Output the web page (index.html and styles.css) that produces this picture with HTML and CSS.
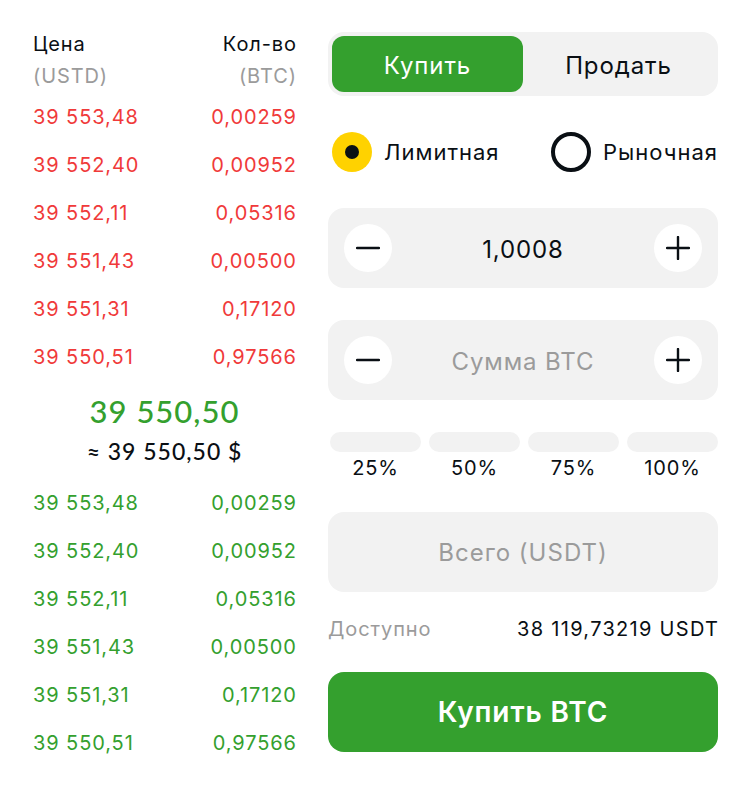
FILE: index.html
```html
<!DOCTYPE html>
<html lang="ru">
<head>
<meta charset="utf-8">
<link rel="stylesheet" href="styles.css">
</head>
<body>
<div class="page">
  <section class="book">
    <div class="book-head">
      <div class="row"><span class="h">Цена</span><span class="h">Кол-во</span></div>
      <div class="row"><span class="sub">(USTD)</span><span class="sub">(BTC)</span></div>
    </div>
    <div class="orders red">
      <div class="order"><span>39 553,48</span><span>0,00259</span></div>
      <div class="order"><span>39 552,40</span><span>0,00952</span></div>
      <div class="order"><span>39 552,11</span><span>0,05316</span></div>
      <div class="order"><span>39 551,43</span><span>0,00500</span></div>
      <div class="order"><span>39 551,31</span><span>0,17120</span></div>
      <div class="order"><span>39 550,51</span><span>0,97566</span></div>
    </div>
    <div class="mid">
      <div class="mid-price">39 550,50</div>
      <div class="mid-usd">≈ 39 550,50 $</div>
    </div>
    <div class="orders green">
      <div class="order"><span>39 553,48</span><span>0,00259</span></div>
      <div class="order"><span>39 552,40</span><span>0,00952</span></div>
      <div class="order"><span>39 552,11</span><span>0,05316</span></div>
      <div class="order"><span>39 551,43</span><span>0,00500</span></div>
      <div class="order"><span>39 551,31</span><span>0,17120</span></div>
      <div class="order"><span>39 550,51</span><span>0,97566</span></div>
    </div>
  </section>

  <section class="form">
    <div class="toggle">
      <button class="tab active">Купить</button>
      <button class="tab">Продать</button>
    </div>

    <div class="radios">
      <label class="radio"><span class="dot on"></span>Лимитная</label>
      <label class="radio"><span class="dot off"></span>Рыночная</label>
    </div>

    <div class="stepper">
      <span class="round"><svg width="24" height="24" viewBox="0 0 24 24"><path d="M1 12h22" stroke="#0a0f14" stroke-width="2.4" stroke-linecap="round"/></svg></span>
      <span class="value">1,0008</span>
      <span class="round"><svg width="24" height="24" viewBox="0 0 24 24"><path d="M1 12h22M12 1v22" stroke="#0a0f14" stroke-width="2.4" stroke-linecap="round"/></svg></span>
    </div>

    <div class="stepper gap32">
      <span class="round"><svg width="24" height="24" viewBox="0 0 24 24"><path d="M1 12h22" stroke="#0a0f14" stroke-width="2.4" stroke-linecap="round"/></svg></span>
      <span class="value placeholder">Сумма BTC</span>
      <span class="round"><svg width="24" height="24" viewBox="0 0 24 24"><path d="M1 12h22M12 1v22" stroke="#0a0f14" stroke-width="2.4" stroke-linecap="round"/></svg></span>
    </div>

    <div class="percents">
      <div class="pct"><span class="bar"></span><span class="pct-label">25%</span></div>
      <div class="pct"><span class="bar"></span><span class="pct-label">50%</span></div>
      <div class="pct"><span class="bar"></span><span class="pct-label">75%</span></div>
      <div class="pct"><span class="bar"></span><span class="pct-label">100%</span></div>
    </div>

    <div class="total">Всего (USDT)</div>

    <div class="avail"><span class="avail-label">Доступно</span><span class="avail-value">38 119,73219 USDT</span></div>

    <button class="buy">Купить BTC</button>
  </section>
</div>
</body>
</html>
```
FILE: styles.css
```css
* { box-sizing: border-box; }
html, body { margin: 0; padding: 0; background: #fff; }
body {
  font-family: Inter, "Noto Sans", sans-serif;
  color: #0a0f14;
  width: 750px;
  height: 786px;
  overflow: hidden;
  letter-spacing: 0.9px;
}
.page {
  display: flex;
  gap: 32px;
  padding: 28px 32px 0 33px;
}
.book { width: 263px; display: flex; flex-direction: column; }
.row, .order {
  display: flex;
  justify-content: space-between;
  align-items: center;
}
.row { height: 32px; font-size: 20px; }
.row span:last-child, .order span:last-child { margin-right: -0.9px; }
.h { color: #0a0f14; }
.sub { color: #9b9b9b; }
.order { height: 48px; font-size: 20px; padding-top: 2px; }
.red .order { color: #f03a3a; }
.green .order { color: #34a02e; }
.mid { padding: 11px 0 7px; text-align: center; }
.mid-price {
  font-family: Lato, "Open Sans", sans-serif;
  font-size: 31px;
  line-height: 40px;
  color: #34a02e;
  font-weight: 500;
  letter-spacing: 1px;
}
.mid-usd {
  font-family: Lato, "Open Sans", sans-serif;
  font-size: 23px;
  line-height: 40px;
  color: #0a0f14;
  font-weight: 500;
  letter-spacing: 1px;
}
.form { width: 390px; display: flex; flex-direction: column; padding-top: 4px; }
.toggle {
  display: flex;
  background: #f2f2f2;
  border-radius: 16px;
  padding: 4px;
  height: 64px;
}
.tab {
  flex: 1;
  border: 0;
  background: transparent;
  font: inherit;
  font-size: 24px;
  letter-spacing: 0.9px;
  color: #0a0f14;
  border-radius: 12px;
  padding-top: 3px;
}
.tab.active { background: #34a02e; color: #fff; }
.radios {
  display: flex;
  justify-content: space-between;
  margin-top: 36px;
  height: 40px;
  padding-left: 4px;
}
.radio {
  display: flex;
  align-items: center;
  gap: 12px;
  font-size: 22px;
  letter-spacing: 1px;
}
.dot {
  width: 40px;
  height: 40px;
  border-radius: 50%;
  display: inline-block;
}
.dot.on { background: #ffd200; position: relative; }
.dot.on::after {
  content: "";
  position: absolute;
  left: 13px; top: 13px;
  width: 14px; height: 14px;
  border-radius: 50%;
  background: #0a0f14;
}
.dot.off { border: 4px solid #0a0f14; }
.stepper {
  margin-top: 36px;
  height: 80px;
  background: #f2f2f2;
  border-radius: 16px;
  display: flex;
  align-items: center;
  justify-content: space-between;
  padding: 0 16px;
}
.stepper.gap32 { margin-top: 32px; }
.round {
  width: 48px; height: 48px;
  border-radius: 50%;
  background: #fff;
  display: flex; align-items: center; justify-content: center;
}
.value { font-size: 24px; padding-top: 2px; }
.placeholder { color: #9b9b9b; }
.percents {
  display: flex;
  gap: 8px;
  margin-top: 32px;
  padding-left: 2px;
}
.pct { flex: 1; display: flex; flex-direction: column; align-items: center; }
.bar {
  width: 100%;
  height: 20px;
  border-radius: 10px;
  background: #f2f2f2;
}
.pct-label { margin-top: 4px; line-height: 24px; font-size: 20px; }
.total {
  margin-top: 32px;
  height: 80px;
  background: #f2f2f2;
  border-radius: 16px;
  display: flex; align-items: center; justify-content: center;
  font-size: 24px;
  letter-spacing: 1px;
  color: #9b9b9b;
}
.avail {
  margin-top: 24px;
  height: 24px;
  display: flex; justify-content: space-between; align-items: center;
  font-size: 20px;
  padding-top: 2px;
}
.avail-value { letter-spacing: 1.3px; margin-right: -1.3px; }
.avail-label { color: #9b9b9b; }
.buy {
  margin-top: 32px;
  height: 80px;
  border: 0;
  border-radius: 16px;
  background: #34a02e;
  color: #fff;
  font: inherit;
  font-size: 28px;
  font-weight: 600;
  letter-spacing: 0.9px;
}
```
